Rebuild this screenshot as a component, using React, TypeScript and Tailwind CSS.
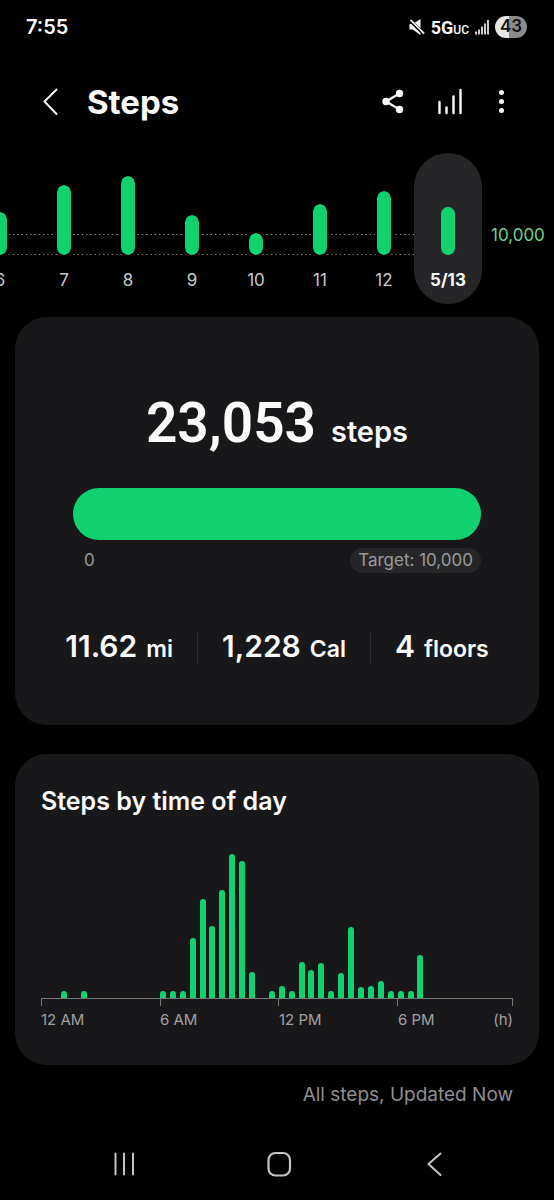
const days = [
  { label: "6", height: 43 },
  { label: "7", height: 70 },
  { label: "8", height: 79 },
  { label: "9", height: 40 },
  { label: "10", height: 22 },
  { label: "11", height: 51 },
  { label: "12", height: 64 },
];

// one value per half hour, starting at midnight
const halfHours = [
  0, 0, 7, 0, 7, 0, 0, 0, 0, 0, 0, 0,
  7, 7, 7, 60, 99, 72, 108, 144, 137, 26, 0, 7,
  12, 7, 36, 28, 35, 7, 25, 71, 11, 12, 17, 7,
  7, 7, 43, 0, 0, 0, 0, 0, 0, 0, 0, 0,
];

const stats = [
  { value: "11.62", unit: "mi" },
  { value: "1,228", unit: "Cal" },
  { value: "4", unit: "floors" },
];

function StatusBar() {
  return (
    <div className="flex h-[53px] items-center justify-between pl-[26px] pr-[27px]">
      <span className="text-xl font-semibold">7:55</span>
      <div className="flex items-center gap-[6px]">
        <svg width="16" height="16" viewBox="0 0 16 16" fill="#f2f2f2">
          <path d="M0.5 5h3.2L11.5 0v16L3.7 10.6H0.5z" />
          <path d="M0 0.5L15.5 15.5" stroke="#000" strokeWidth="3.4" />
          <path d="M1.5 0.8L15.2 14.6" stroke="#f2f2f2" strokeWidth="1.7" />
        </svg>
        <span className="pt-[3px] font-[Roboto,sans-serif] text-lg leading-5 font-bold">
          5G<span className="text-xs font-medium">UC</span>
        </span>
        <svg width="14" height="16" viewBox="0 0 14 16" stroke="#f2f2f2" strokeWidth="1.7">
          <path d="M1 15.5v-3M4 15.5v-5M7 15.5v-8M10 15.5v-11M13 15.5V1" />
        </svg>
        <span className="flex h-[22px] w-8 items-center justify-center rounded-full bg-linear-to-r from-[#e6e6e6] from-43% to-[#8c8c8c] to-43% text-[17px] font-semibold text-[#111]">
          43
        </span>
      </div>
    </div>
  );
}

function Header() {
  return (
    <header className="flex h-[98px] items-center pl-[38px] pr-[33px]">
      <button aria-label="Back" className="flex size-7 items-center justify-center">
        <svg width="28" height="28" viewBox="0 0 28 28" fill="none" stroke="#fafafa" strokeWidth="2" strokeLinecap="round" strokeLinejoin="round">
          <path d="M18.5 1.5L6.5 13.5L18.5 26" />
        </svg>
      </button>
      <h1 className="ml-[21px] text-[33px] leading-10 font-bold">Steps</h1>
      <div className="ml-auto flex items-center gap-[29px]">
        <button aria-label="Share">
          <svg width="28" height="28" viewBox="0 0 28 28" fill="#fafafa">
            <path d="M20.5 5.5L7 13.5L20.5 21.5" fill="none" stroke="#fafafa" strokeWidth="2.2" />
            <circle cx="20.5" cy="5.5" r="3.7" />
            <circle cx="7" cy="13.5" r="3.7" />
            <circle cx="20.5" cy="21.5" r="3.7" />
          </svg>
        </button>
        <button aria-label="Trends">
          <svg width="28" height="28" viewBox="0 0 28 28" stroke="#fafafa" strokeWidth="2.4" strokeLinecap="round">
            <path d="M3.5 14v11M10.5 19.5v5.5M17.5 8.5v16.5M24.5 2v23" />
          </svg>
        </button>
        <button aria-label="More options">
          <svg width="28" height="28" viewBox="0 0 28 28" fill="#fafafa">
            <circle cx="8.5" cy="4.5" r="2.5" />
            <circle cx="8.5" cy="13.5" r="2.5" />
            <circle cx="8.5" cy="22.5" r="2.5" />
          </svg>
        </button>
      </div>
    </header>
  );
}

function DayColumn({ label, height }: { label: string; height: number }) {
  return (
    <button className="flex w-16 shrink-0 flex-col items-center pb-3 text-[17px] text-[#c9c9c9]">
      <span className="flex h-[102px] items-end border-x-2 border-transparent">
        <span className="w-[14px] rounded-full bg-[#12d171] outline-2 outline-black" style={{ height }} />
      </span>
      <span className="mt-[13px] leading-6">{label}</span>
    </button>
  );
}

function DayStrip() {
  return (
    <section className="flex items-start overflow-hidden pt-[2px]">
      <div className="relative flex min-w-0 flex-1 justify-end">
        <svg className="absolute inset-x-0 top-[80px] h-6 w-full" aria-hidden="true">
          <line x1="0" y1="1.5" x2="100%" y2="1.5" stroke="#76a184" strokeWidth="1" strokeDasharray="1.4 2.9" />
          <line x1="0" y1="21.5" x2="100%" y2="21.5" stroke="#7d7d7d" strokeWidth="1" strokeDasharray="1.4 2.9" />
        </svg>
        <div className="relative -mr-[2px] flex shrink-0">
          {days.map((d) => (
            <DayColumn key={d.label} label={d.label} height={d.height} />
          ))}
        </div>
      </div>
      <button className="relative flex w-[68px] shrink-0 flex-col items-center rounded-full bg-[#262628] pb-3 text-[17px] font-bold">
        <span className="flex h-[102px] items-end">
          <span className="h-12 w-[14px] rounded-full bg-[#12d171]" />
        </span>
        <span className="mt-[13px] leading-6">5/13</span>
      </button>
      <span className="w-[72px] shrink-0 pt-[70px] pl-[9px] text-[17px] leading-6 whitespace-nowrap text-[#6fd292]">10,000</span>
    </section>
  );
}

function Summary() {
  return (
    <section className="mx-[15px] mt-[13px] rounded-[32px] bg-[#18181a] px-[58px] pt-[71px] pb-[62px]">
      <p className="flex items-baseline justify-center gap-[15px] leading-[70px]">
        <span className="font-[Roboto,sans-serif] text-[55px] font-semibold">23,053</span>
        <span className="text-[29px] font-semibold">steps</span>
      </p>
      <div className="mt-[21px] h-[52px] rounded-full bg-[#12d171]" />
      <div className="mt-2 flex items-center justify-between pl-[11px] text-[17px] leading-[25px] text-[#9a9a9c]">
        <span>0</span>
        <span className="rounded-full bg-[#262628] px-2">Target: 10,000</span>
      </div>
      <div className="-mx-5 mt-[59px] flex items-center justify-center">
        {stats.map((s) => (
          <div key={s.unit} className="flex items-center border-l border-[#2e2e30] px-6 first:border-l-0">
            <span className="flex items-baseline gap-[9px] leading-7 whitespace-nowrap">
              <span className="text-3xl leading-7 font-semibold">{s.value}</span>
              <span className="text-[23px] leading-7 font-semibold">{s.unit}</span>
            </span>
          </div>
        ))}
      </div>
    </section>
  );
}

function TimeOfDay() {
  return (
    <section className="mx-[15px] mt-[29px] rounded-[32px] bg-[#18181a] px-[26px] pt-[31px] pb-[35px]">
      <h2 className="text-[25px] leading-8 font-semibold">Steps by time of day</h2>
      <div className="mt-[37px] flex h-[144px] items-end justify-between">
        {halfHours.map((h, i) => (
          <span key={i} className="w-[6px] rounded-t-full bg-[#12d171]" style={{ height: h }} />
        ))}
      </div>
      <div className="grid h-2 grid-cols-[119fr_119fr_119fr_115fr] border-t border-r border-[#777]">
        <span className="border-l border-[#777]" />
        <span className="border-l border-[#777]" />
        <span className="border-l border-[#777]" />
        <span className="border-l border-[#777]" />
      </div>
      <div className="mt-1 grid grid-cols-[119fr_119fr_119fr_115fr] text-[15px] leading-5 text-[#a0a0a2]">
        <span>12 AM</span>
        <span>6 AM</span>
        <span>12 PM</span>
        <span className="flex justify-between">
          <span>6 PM</span>
          <span>(h)</span>
        </span>
      </div>
    </section>
  );
}

function NavBar() {
  return (
    <nav className="mt-auto flex h-[72px] items-center pl-[47px] pr-[43px] text-[#c4c4c4]">
      <button aria-label="Recents" className="flex flex-1 justify-center">
        <svg width="28" height="28" viewBox="0 0 28 28" stroke="currentColor" strokeWidth="2" strokeLinecap="round">
          <path d="M5.5 3.5v21M14 3.5v21M23 3.5v21" />
        </svg>
      </button>
      <button aria-label="Home" className="flex flex-1 justify-center">
        <svg width="28" height="28" viewBox="0 0 28 28" fill="none" stroke="currentColor" strokeWidth="2.2">
          <rect x="3.5" y="3" width="21.5" height="22.5" rx="7" />
        </svg>
      </button>
      <button aria-label="Back" className="flex flex-1 justify-center">
        <svg width="28" height="28" viewBox="0 0 28 28" fill="none" stroke="currentColor" strokeWidth="2" strokeLinecap="round" strokeLinejoin="round">
          <path d="M20.5 3.5L8.5 14L20.5 25" />
        </svg>
      </button>
    </nav>
  );
}

export default function App() {
  return (
    <main className="flex min-h-screen flex-col bg-black font-[Inter,sans-serif] text-[#fafafa]">
      <StatusBar />
      <Header />
      <DayStrip />
      <Summary />
      <TimeOfDay />
      <p className="mt-[18px] pr-[41px] text-right text-[19px] leading-6 text-[#8e8e90]">All steps, Updated Now</p>
      <NavBar />
    </main>
  );
}
